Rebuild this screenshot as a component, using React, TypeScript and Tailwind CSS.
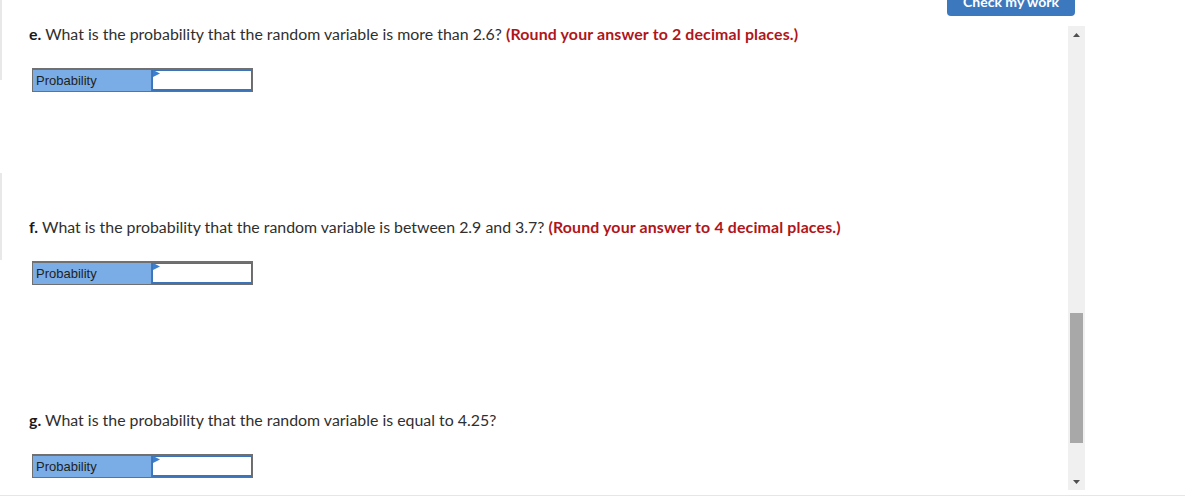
import React from "react";

type Question = {
  letter: string;
  text: string;
  hint?: string;
  edge?: string;
};

const questions: Question[] = [
  {
    letter: "e.",
    text: "What is the probability that the random variable is more than 2.6?",
    hint: "(Round your answer to 2 decimal places.)",
    edge: "top-[-26px] h-[80px]",
  },
  {
    letter: "f.",
    text: "What is the probability that the random variable is between 2.9 and 3.7?",
    hint: "(Round your answer to 4 decimal places.)",
    edge: "top-[-46px] h-[87px]",
  },
  {
    letter: "g.",
    text: "What is the probability that the random variable is equal to 4.25?",
  },
];

const AnswerRow = () => (
  <div className="flex w-[221px] h-[24px] border border-[#707070] border-t-2">
    <div className="w-[119px] bg-[#7aade5] border-r border-[#707070] pl-[3px] text-[13px] leading-[21px] text-[#1f1f1f] font-['Liberation_Sans',Arial,sans-serif]">
      Probability
    </div>
    <div className="relative flex-1 bg-white border border-[#3b74b8] border-b-2">
      {/* small flag marking the editable cell */}
      <svg className="absolute left-0 top-[-1px]" width="7" height="8" viewBox="0 0 7 8">
        <path d="M0 0 L7 3.5 L0 7 Z" fill="#3b7fd0" />
      </svg>
    </div>
  </div>
);

const ScrollBar = () => (
  <div className="w-[17px] h-[464px] bg-[#f0f0f0] flex flex-col items-center">
    <div className="h-[17px] flex items-center justify-center">
      <svg width="7" height="4" viewBox="0 0 7 4">
        <path d="M0 4 L3.5 0 L7 4 Z" fill="#505050" />
      </svg>
    </div>
    <div className="h-[270px]" />
    <div className="w-[13px] h-[130px] bg-[#a8a8a8]" />
    <div className="flex-1" />
    <div className="h-[17px] flex items-center justify-center">
      <svg width="7" height="4" viewBox="0 0 7 4">
        <path d="M0 0 L3.5 4 L7 0 Z" fill="#505050" />
      </svg>
    </div>
  </div>
);

export default function App() {
  return (
    <div className="w-[1185px] h-[501px] bg-white overflow-hidden font-['Lato','Open_Sans',sans-serif]">
      <div className="h-[26px] flex justify-end pr-[110px]">
        <button className="w-[128px] h-[30px] -mt-[14px] rounded-[4px] bg-[#3b78be] text-white text-[14px] font-bold">
          Check my work
        </button>
      </div>

      <div className="flex">
        <div className="flex-1 flex flex-col">
          {questions.map((q, i) => (
            <div key={q.letter} className={`relative pl-[29px] ${i < 2 ? "h-[193px]" : ""}`}>
              {q.edge && (
                <div className={`absolute left-0 w-[2px] bg-[#e8e8e8] ${q.edge}`} />
              )}
              <p className="text-[15.9px] leading-[16px] text-[#2f2f2f]">
                <span className="font-bold text-[#1a1a1a]">{q.letter}</span> {q.text}
                {q.hint && (
                  <span className="font-bold tracking-[0.15px] text-[#b0151b]"> {q.hint}</span>
                )}
              </p>
              <div className="mt-[26px] pl-[3px]">
                <AnswerRow />
              </div>
            </div>
          ))}
        </div>
        <ScrollBar />
        <div className="w-[100px]" />
      </div>

      <div className="mt-[5px] h-px bg-[#e6e6e6]" />
    </div>
  );
}
